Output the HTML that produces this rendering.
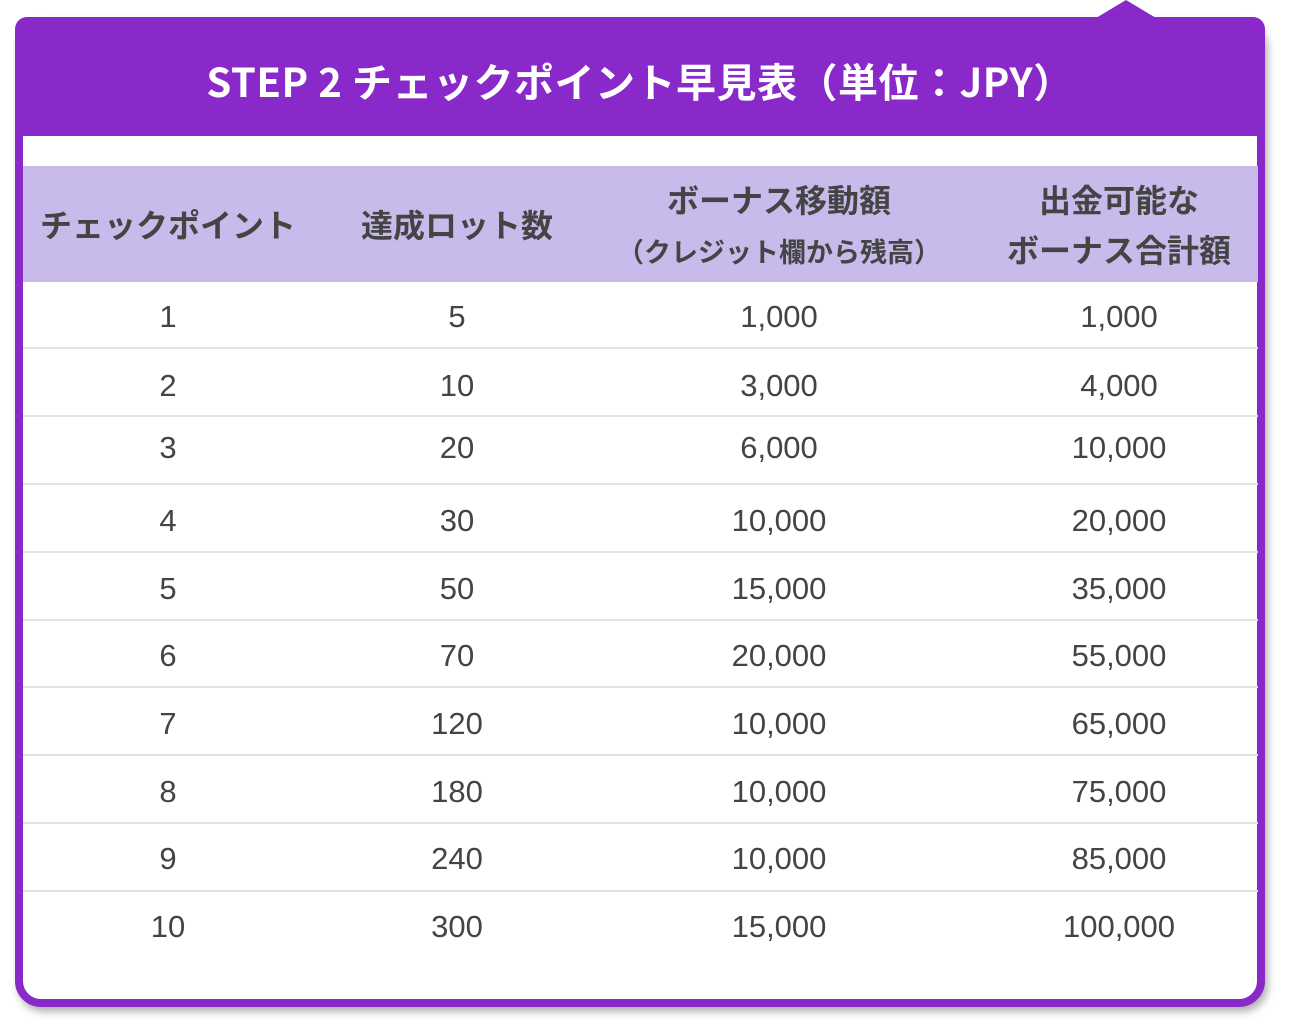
<!DOCTYPE html>
<html><head><meta charset="utf-8"><style>
html,body{margin:0;padding:0;background:#fff;width:1294px;height:1032px;overflow:hidden;font-family:"Liberation Sans","Noto Sans CJK JP",sans-serif;}
.card{position:absolute;left:15px;top:17px;width:1250px;height:990px;box-sizing:border-box;border:8px solid #8a29c9;border-radius:26px;background:#fff;box-shadow:3px 5px 8px rgba(0,0,0,0.3);}
.hdr{position:absolute;left:15px;top:17px;width:1250px;height:119px;background:#8a29c9;border-radius:12px 12px 0 0;}
.tri{position:absolute;left:1096px;top:0;width:0;height:0;border-left:30px solid transparent;border-right:30px solid transparent;border-bottom:18px solid #8a29c9;}
.title{position:absolute;left:15px;top:50px;width:1250px;text-align:center;color:#fff;font-weight:bold;font-size:40px;line-height:60px;font-family:"Noto Sans CJK JP","Liberation Sans",sans-serif;letter-spacing:0.5px;}
.th{position:absolute;left:23px;top:166px;width:1235px;height:116px;background:#c9baec;}
.t{position:absolute;transform:translateX(-50%);white-space:nowrap;color:#444;text-align:center;}
.h{font-family:"Noto Sans CJK JP",sans-serif;font-weight:bold;font-size:32px;line-height:50px;}
.n{font-size:31px;line-height:40px;}
.line{position:absolute;left:23px;width:1235px;height:2px;background:#e2e2e2;}
</style></head><body>
<div class="tri"></div>
<div class="card"></div>
<div class="hdr"></div>
<div class="title">STEP 2 チェックポイント早見表（単位：JPY）</div>
<div class="th"></div>
<div class="t h" style="left:168px;top:199px">チェックポイント</div>
<div class="t h" style="left:457px;top:199px">達成ロット数</div>
<div class="t h" style="left:779px;top:174px">ボーナス移動額</div>
<div class="t h" style="left:779px;top:226px;font-size:27px">（クレジット欄から残高）</div>
<div class="t h" style="left:1119px;top:174px">出金可能な</div>
<div class="t h" style="left:1119px;top:224px">ボーナス合計額</div>
<div class="line" style="top:347px"></div>
<div class="line" style="top:415px"></div>
<div class="line" style="top:483px"></div>
<div class="line" style="top:551px"></div>
<div class="line" style="top:619px"></div>
<div class="line" style="top:686px"></div>
<div class="line" style="top:754px"></div>
<div class="line" style="top:822px"></div>
<div class="line" style="top:890px"></div>

<div class="t n" style="left:168px;top:297px">1</div><div class="t n" style="left:457px;top:297px">5</div><div class="t n" style="left:779px;top:297px">1,000</div><div class="t n" style="left:1119px;top:297px">1,000</div>
<div class="t n" style="left:168px;top:366px">2</div><div class="t n" style="left:457px;top:366px">10</div><div class="t n" style="left:779px;top:366px">3,000</div><div class="t n" style="left:1119px;top:366px">4,000</div>
<div class="t n" style="left:168px;top:428px">3</div><div class="t n" style="left:457px;top:428px">20</div><div class="t n" style="left:779px;top:428px">6,000</div><div class="t n" style="left:1119px;top:428px">10,000</div>
<div class="t n" style="left:168px;top:501px">4</div><div class="t n" style="left:457px;top:501px">30</div><div class="t n" style="left:779px;top:501px">10,000</div><div class="t n" style="left:1119px;top:501px">20,000</div>
<div class="t n" style="left:168px;top:569px">5</div><div class="t n" style="left:457px;top:569px">50</div><div class="t n" style="left:779px;top:569px">15,000</div><div class="t n" style="left:1119px;top:569px">35,000</div>
<div class="t n" style="left:168px;top:636px">6</div><div class="t n" style="left:457px;top:636px">70</div><div class="t n" style="left:779px;top:636px">20,000</div><div class="t n" style="left:1119px;top:636px">55,000</div>
<div class="t n" style="left:168px;top:704px">7</div><div class="t n" style="left:457px;top:704px">120</div><div class="t n" style="left:779px;top:704px">10,000</div><div class="t n" style="left:1119px;top:704px">65,000</div>
<div class="t n" style="left:168px;top:772px">8</div><div class="t n" style="left:457px;top:772px">180</div><div class="t n" style="left:779px;top:772px">10,000</div><div class="t n" style="left:1119px;top:772px">75,000</div>
<div class="t n" style="left:168px;top:839px">9</div><div class="t n" style="left:457px;top:839px">240</div><div class="t n" style="left:779px;top:839px">10,000</div><div class="t n" style="left:1119px;top:839px">85,000</div>
<div class="t n" style="left:168px;top:907px">10</div><div class="t n" style="left:457px;top:907px">300</div><div class="t n" style="left:779px;top:907px">15,000</div><div class="t n" style="left:1119px;top:907px">100,000</div>
</body></html>
